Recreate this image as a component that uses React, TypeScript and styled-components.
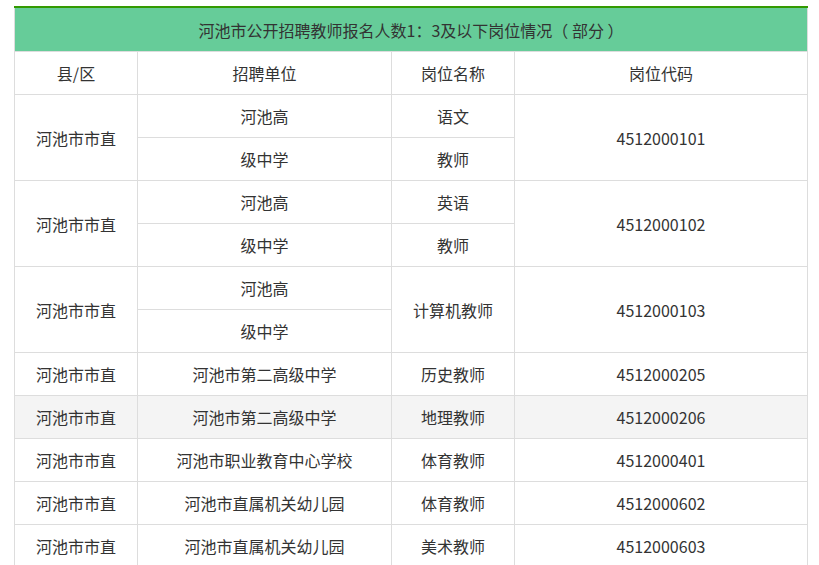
import styled, { createGlobalStyle } from "styled-components";

type Row = {
  county: string;
  units: string[];
  posts: string[];
  code: string;
  active?: boolean;
};

const ROWS: Row[] = [
  { county: "河池市市直", units: ["河池高", "级中学"], posts: ["语文", "教师"], code: "4512000101" },
  { county: "河池市市直", units: ["河池高", "级中学"], posts: ["英语", "教师"], code: "4512000102" },
  { county: "河池市市直", units: ["河池高", "级中学"], posts: ["计算机教师"], code: "4512000103" },
  { county: "河池市市直", units: ["河池市第二高级中学"], posts: ["历史教师"], code: "4512000205" },
  { county: "河池市市直", units: ["河池市第二高级中学"], posts: ["地理教师"], code: "4512000206", active: true },
  { county: "河池市市直", units: ["河池市职业教育中心学校"], posts: ["体育教师"], code: "4512000401" },
  { county: "河池市市直", units: ["河池市直属机关幼儿园"], posts: ["体育教师"], code: "4512000602" },
  { county: "河池市市直", units: ["河池市直属机关幼儿园"], posts: ["美术教师"], code: "4512000603" },
];

const GlobalStyle = createGlobalStyle`
  html, body {
    margin: 0;
    background: #fff;
  }
  body {
    font-family: "Noto Sans CJK SC", "Noto Sans", sans-serif;
    color: #333;
  }
`;

export default function App() {
  return (
    <>
      <GlobalStyle />
      <St.Page>
        <St.Table>
          <colgroup>
            <col style={{ width: 123 }} />
            <col style={{ width: 254 }} />
            <col style={{ width: 123 }} />
            <col />
          </colgroup>
          <thead>
            <tr>
              <St.Title colSpan={4}>河池市公开招聘教师报名人数1：3及以下岗位情况（ 部分 ）</St.Title>
            </tr>
            <tr>
              <St.Cell>县/区</St.Cell>
              <St.Cell>招聘单位</St.Cell>
              <St.Cell>岗位名称</St.Cell>
              <St.Cell>岗位代码</St.Cell>
            </tr>
          </thead>
          <tbody>
            {ROWS.map((row, i) => {
              const span = row.units.length;
              return row.units.map((unit, j) => (
                <St.Row key={`${i}-${j}`} $active={row.active}>
                  {j === 0 && <St.Cell rowSpan={span}>{row.county}</St.Cell>}
                  <St.Cell>{unit}</St.Cell>
                  {row.posts.length === span ? (
                    <St.Cell>{row.posts[j]}</St.Cell>
                  ) : (
                    j === 0 && <St.Cell rowSpan={span}>{row.posts[0]}</St.Cell>
                  )}
                  {j === 0 && <St.Cell rowSpan={span}>{row.code}</St.Cell>}
                </St.Row>
              ));
            })}
          </tbody>
        </St.Table>
      </St.Page>
    </>
  );
}

const St = {
  Page: styled.div`
    padding: 6px 0 0 14px;
    height: 565px;
    box-sizing: border-box;
    overflow: hidden;
  `,

  Table: styled.table`
    width: 794px;
    border-collapse: collapse;
    table-layout: fixed;
    font-size: 16px;
    border-top: 2px solid #339900;
  `,

  Title: styled.th`
    height: 43px;
    padding: 0;
    background: #66cc99;
    font-weight: normal;
    text-align: center;
    border: 1px solid #dddddd;
    border-top: none;
    color: #333;
  `,

  Row: styled.tr<{ $active?: boolean }>`
    background: ${({ $active }) => ($active ? "#f4f4f4" : "#fff")};
  `,

  Cell: styled.td`
    height: 42px;
    padding: 0;
    text-align: center;
    border: 1px solid #dddddd;
    color: #333;
    line-height: 20px;
  `,
};
